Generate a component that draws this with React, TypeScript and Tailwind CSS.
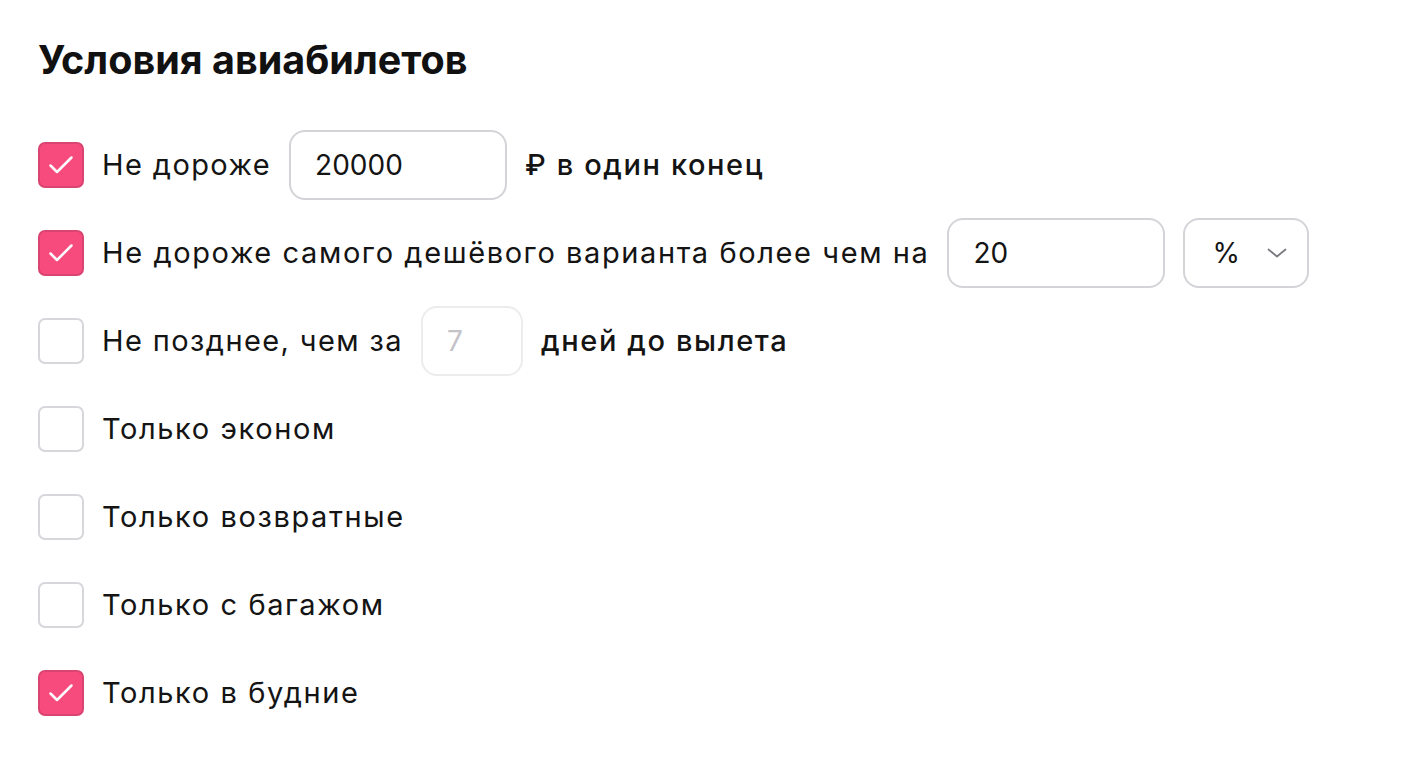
type Row = {
  checked: boolean;
  label: string;
  tight?: boolean;
  extra?: React.ReactNode;
};

function Checkbox({ checked }: { checked: boolean }) {
  return (
    <div
      className={
        checked
          ? "w-[46px] h-[46px] shrink-0 rounded-[7px] bg-[#f74b7e] border-2 border-[#d94473] flex items-center justify-center"
          : "w-[46px] h-[46px] shrink-0 rounded-[7px] bg-white border-2 border-[#d6d6db]"
      }
    >
      {checked && (
        <svg width="26" height="20" viewBox="0 0 26 20" fill="none">
          <path d="M2.5 10.5l6.5 6.5L23.5 2.5" stroke="white" strokeWidth="2.5" strokeLinecap="round" strokeLinejoin="round" />
        </svg>
      )}
    </div>
  );
}

function Field({ value, width, muted }: { value: string; width: string; muted?: boolean }) {
  return (
    <div
      className={`${width} h-[70px] shrink-0 rounded-[16px] border-2 bg-white flex items-center pl-[24px] text-[28px] tracking-normal ${
        muted ? "border-[#ececef] text-[#c4c4c8]" : "border-[#d4d4d8] text-[#141414]"
      }`}
    >
      {value}
    </div>
  );
}

export default function App() {
  const rows: Row[] = [
    {
      checked: true,
      label: "Не дороже",
      tight: true,
      extra: (
        <>
          <Field value="20000" width="w-[218px]" />
          <span className="font-medium">₽ в один конец</span>
        </>
      ),
    },
    {
      checked: true,
      label: "Не дороже самого дешёвого варианта более чем на",
      extra: (
        <>
          <Field value="20" width="w-[218px]" />
          <div className="w-[126px] h-[70px] shrink-0 rounded-[16px] border-2 border-[#d4d4d8] bg-white flex items-center pl-[27px] gap-[27px] text-[28px] tracking-normal">
            <span>%</span>
            <svg width="20" height="10" viewBox="0 0 20 10" fill="none">
              <path d="M1.5 1.5L10 8.5l8.5-7" stroke="#7a7a82" strokeWidth="1.8" strokeLinecap="round" strokeLinejoin="round" />
            </svg>
          </div>
        </>
      ),
    },
    {
      checked: false,
      label: "Не позднее, чем за",
      tight: true,
      extra: (
        <>
          <Field value="7" width="w-[102px]" muted />
          <span className="font-medium">дней до вылета</span>
        </>
      ),
    },
    { checked: false, label: "Только эконом" },
    { checked: false, label: "Только возвратные" },
    { checked: false, label: "Только с багажом" },
    { checked: true, label: "Только в будние" },
  ];

  return (
    <div className="min-h-screen bg-white pl-[38px] pt-[36px] text-[#141414] font-['Inter','Noto_Sans',sans-serif]">
      <h1 className="text-[39.5px] leading-[48px] font-bold text-[#111]">Условия авиабилетов</h1>
      <div className="mt-[46px] flex flex-col gap-[18px] text-[29px] tracking-[1.6px]">
        {rows.map((r) => (
          <div key={r.label} className="h-[70px] flex items-center gap-[18px]">
            <Checkbox checked={r.checked} />
            <span className={r.tight ? "tracking-[1.4px]" : ""}>{r.label}</span>
            {r.extra}
          </div>
        ))}
      </div>
    </div>
  );
}
